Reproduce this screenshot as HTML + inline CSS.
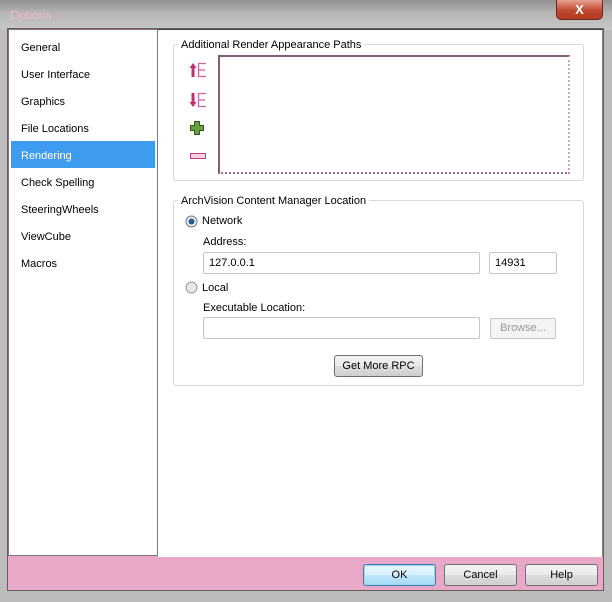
<!DOCTYPE html>
<html><head><style>
*{margin:0;padding:0;box-sizing:border-box}
body{width:612px;height:602px;position:relative;overflow:hidden;background:#bcbcbc;font-family:"Liberation Sans",sans-serif;font-size:11px;color:#000}
.abs{position:absolute}
.title{left:0;top:0;width:612px;height:30px;background:linear-gradient(#909090,#b4b4b4 40%,#c8c8c8)}
.close{left:556px;top:0;width:47px;height:20px;background:linear-gradient(#e8a090,#c04a30 55%,#b03a20);border:1px solid #6a2a20;border-top:none;border-radius:0 0 5px 5px;color:#fff;font-weight:bold;text-align:center;line-height:19px;font-size:13px}
.frame{left:7px;top:28px;width:597px;height:563px;background:#e8a8c8;border:1px solid #606060}
.left{left:8px;top:29px;width:150px;height:527px;background:#fff;border:1px solid #8a7080}
.right{left:158px;top:29px;width:445px;height:528px;background:#fff;border-top:1px solid #404040;border-right:1px solid #888}
.item{left:21px;font-size:11px}
.sel{left:11px;top:141px;width:144px;height:27px;background:#3d9cf0}
.grp{border:1px solid #d8d8d8;border-radius:3px}
.lbl{background:#fff;padding:0 3px}
.box{border:1px solid #c6c6c6;background:#fff;border-radius:2px}
.btn{border:1px solid #707070;border-radius:3px;background:linear-gradient(#f2f2f2,#ebebeb 50%,#dddddd 51%,#cfcfcf);text-align:center;font-size:11px}
</style></head><body>
<div class="abs title"></div>
<div class="abs" style="left:10px;top:8px;color:#f0b8d0;font-size:12px">Options</div>
<div class="abs close">X</div>
<div class="abs frame"></div>
<div class="abs left"></div>
<div class="abs right"></div>
<div class="abs sel"></div>
<div class="abs item" style="top:42px">General</div>
<div class="abs item" style="top:69px">User Interface</div>
<div class="abs item" style="top:96px">Graphics</div>
<div class="abs item" style="top:123px">File Locations</div>
<div class="abs item" style="top:150px;color:#fff">Rendering</div>
<div class="abs item" style="top:177px">Check Spelling</div>
<div class="abs item" style="top:204px">SteeringWheels</div>
<div class="abs item" style="top:231px">ViewCube</div>
<div class="abs item" style="top:258px">Macros</div>

<div class="abs grp" style="left:173px;top:44px;width:411px;height:137px"></div>
<div class="abs lbl" style="left:178px;top:39px">Additional Render Appearance Paths</div>
<div class="abs" style="left:218px;top:55px;width:352px;height:119px;border:2px solid #8a5a78;border-right:2px dotted #d8a0c0;border-bottom:2px dotted #a07090"></div>
<svg class="abs" style="left:189px;top:62px" width="20" height="16"><path d="M4 15V5" stroke="#c0306a" stroke-width="3"/><path d="M0.5 6L4 1l3.5 5z" fill="#c0306a"/><path d="M17 1.5H9.5V14.5H17M9.5 8H16" fill="none" stroke="#d060a0" stroke-width="1.2"/></svg>
<svg class="abs" style="left:189px;top:92px" width="20" height="16"><path d="M4 1V11" stroke="#c0306a" stroke-width="3"/><path d="M0.5 10L4 15l3.5-5z" fill="#c0306a"/><path d="M17 1.5H9.5V14.5H17M9.5 8H16" fill="none" stroke="#d060a0" stroke-width="1.2"/></svg>
<svg class="abs" style="left:189px;top:120px" width="16" height="16"><path d="M5.5 1.5h5v4h4v5h-4v4h-5v-4h-4v-5h4z" fill="#6aa040" stroke="#2e5a18"/></svg>
<div class="abs" style="left:190px;top:153px;width:16px;height:6px;border:1px solid #c04080;background:#f8d0e4"></div>

<div class="abs grp" style="left:173px;top:200px;width:411px;height:186px"></div>
<div class="abs lbl" style="left:178px;top:195px">ArchVision Content Manager Location</div>
<svg class="abs" style="left:185px;top:215px" width="13" height="13"><circle cx="6.5" cy="6.5" r="5.5" fill="#eee" stroke="#7a7a7a"/><circle cx="6.5" cy="6.5" r="3" fill="#1e5e9a"/></svg>
<div class="abs" style="left:202px;top:215px">Network</div>
<div class="abs" style="left:203px;top:236px">Address:</div>
<div class="abs box" style="left:203px;top:252px;width:277px;height:22px;padding:4px 5px">127.0.0.1</div>
<div class="abs box" style="left:489px;top:252px;width:68px;height:22px;padding:4px 5px">14931</div>
<svg class="abs" style="left:185px;top:281px" width="13" height="13"><circle cx="6.5" cy="6.5" r="5.5" fill="#e8e8e8" stroke="#9a9a9a"/></svg>
<div class="abs" style="left:202px;top:282px">Local</div>
<div class="abs" style="left:203px;top:302px">Executable Location:</div>
<div class="abs box" style="left:203px;top:317px;width:277px;height:22px"></div>
<div class="abs box" style="left:490px;top:318px;width:66px;height:21px;color:#999;text-align:center;line-height:19px;background:#f4f4f4">Browse...</div>
<div class="abs btn" style="left:334px;top:355px;width:89px;height:22px;line-height:20px">Get More RPC</div>

<div class="abs btn" style="left:363px;top:564px;width:73px;height:22px;line-height:20px;border-color:#3c7fb1;box-shadow:inset 0 0 0 1px #9fd6f4;background:linear-gradient(#eaf6fd,#d9f0fc 50%,#bee6fd 51%,#a7d9f5)">OK</div>
<div class="abs btn" style="left:444px;top:564px;width:73px;height:22px;line-height:20px">Cancel</div>
<div class="abs btn" style="left:525px;top:564px;width:73px;height:22px;line-height:20px">Help</div>
</body></html>
